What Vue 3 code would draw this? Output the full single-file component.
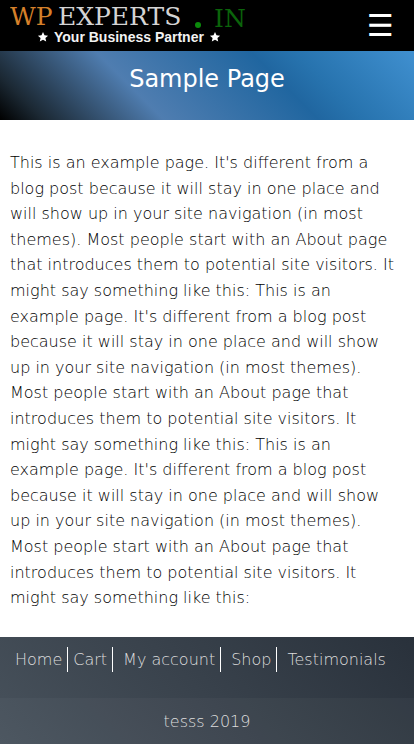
<script setup>
const sentence =
  "This is an example page. It's different from a blog post because it will stay in one place and will show up in your site navigation (in most themes). Most people start with an About page that introduces them to potential site visitors. It might say something like this:"
const body = Array(3).fill(sentence).join(' ')
const links = ['Home', 'Cart', 'My account', 'Shop', 'Testimonials']
</script>

<template>
  <div class="page">
    <header class="topbar">
      <a class="logo" href="#" aria-label="WPEXPERTS.IN">
        <svg width="240" height="48" viewBox="0 0 240 48">
          <g class="wordmark">
            <text class="orange" x="0" y="25">WP</text>
            <text class="silver" x="48" y="25">EXPERTS</text>
            <circle class="green-fill" cx="188" cy="25" r="3" />
            <text class="green" x="204" y="27">IN</text>
          </g>
          <path class="star" d="M33 32l1.5 3.3 3.6.4-2.7 2.4.8 3.5-3.2-1.8-3.2 1.8.8-3.5-2.7-2.4 3.6-.4z" />
          <text class="tagline" x="44" y="42">Your Business Partner</text>
          <path class="star" d="M205 32l1.5 3.3 3.6.4-2.7 2.4.8 3.5-3.2-1.8-3.2 1.8.8-3.5-2.7-2.4 3.6-.4z" />
        </svg>
      </a>
      <button class="menu" type="button" aria-label="Menu">☰</button>
    </header>

    <section class="banner">
      <h1>Sample Page</h1>
    </section>

    <main class="content">
      <p>{{ body }}</p>
    </main>

    <footer class="footer">
      <nav class="links">
        <a v-for="link in links" :key="link" href="#">{{ link }}</a>
      </nav>
      <p class="copyright">tesss 2019</p>
    </footer>
  </div>
</template>

<style>
body {
  margin: 0;
  background: #fff;
}
</style>

<style scoped>
.page {
  font-family: 'DejaVu Sans', sans-serif;
  font-size: 16px;
  font-weight: 300;
  line-height: 1.6;
  color: #000;
}
.topbar {
  display: flex;
  justify-content: space-between;
  height: 51px;
  background: #000;
}
.logo {
  padding: 0 10px;
}
.logo svg {
  display: block;
}
.wordmark {
  font: 25px 'DejaVu Serif', serif;
}
.orange {
  fill: #d5802a;
}
.silver {
  fill: #d4d4d4;
}
.green {
  fill: #0b640b;
}
.green-fill {
  fill: #0b8a0b;
}
.tagline {
  fill: #f2f2f2;
  font: bold 14px 'Liberation Sans', sans-serif;
}
.star {
  fill: #fff;
}
.menu {
  padding: 0 20px;
  border: 0;
  background: none;
  color: #fff;
  font: 30px 'DejaVu Sans', sans-serif;
}
.banner {
  height: 69px;
  background: linear-gradient(45deg, #000, #1b2833 9%, #4f7db0 34%, #2066a0 66%, #2773ae 75%, #4090d0);
  text-align: center;
}
.banner h1 {
  margin: 0;
  padding-top: 9px;
  color: #fff;
  font-size: 24px;
  font-weight: 400;
}
.content {
  padding: 30px 10px 26px;
}
.content p {
  margin: 0;
}
.footer {
  background: linear-gradient(45deg, #48525c, #29313b);
  color: #ddd;
}
.links {
  display: flex;
  padding: 10px 10px 26px;
}
.links a {
  padding: 0 5px;
  border-right: 1px solid #fff;
  color: inherit;
  text-decoration: none;
}
.links a:nth-child(n + 3) {
  padding-left: 10px;
}
.links a:last-child {
  border-right: 0;
}
.copyright {
  margin: 0;
  padding: 11px 10px 9px;
  text-align: center;
  background: rgba(255, 255, 255, 0.03);
}
</style>
